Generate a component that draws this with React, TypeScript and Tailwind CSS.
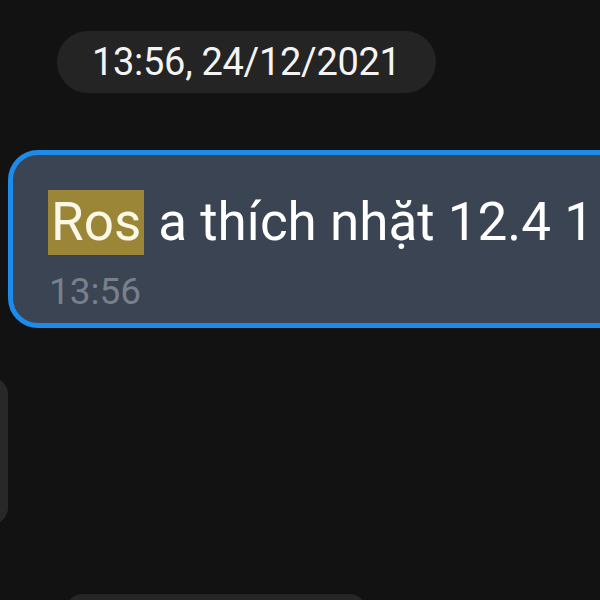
export default function App() {
  return (
    <div
      className="w-[600px] h-[600px] overflow-hidden bg-[#121212] flex flex-col"
      style={{ fontFamily: 'Roboto, "Noto Sans", sans-serif' }}
    >
      <div className="mt-[31px] ml-[57px] w-[379px] h-[62px] rounded-full bg-[#242424] flex items-center pl-[35px] shrink-0">
        <span className="text-[38px] leading-none text-[#f4f4f4] whitespace-nowrap tracking-[-0.3px]">
          13:56, 24/12/2021
        </span>
      </div>

      <div className="mt-[57px] ml-[8px] w-[720px] h-[178px] shrink-0 rounded-[30px] border-[5px] border-[#1d8be9] bg-[#3a4452] pl-[35px] pt-[35px] flex flex-col">
        <div className="flex items-center whitespace-nowrap text-[53px] leading-none text-white h-[65px]">
          <span className="bg-[#9a8636] h-[65px] flex items-center px-[3px] text-[#fbf8e8]">Ros</span>
          <span className="ml-[14px]">a thích nhặt 12.4 1</span>
        </div>
        <div className="mt-[18px] ml-[1px] text-[37px] leading-none text-[#78808c]">13:56</div>
      </div>

      <div className="mt-[50px] -ml-[12px] w-[20px] h-[146px] shrink-0 rounded-r-[16px] bg-[#282828]" />

      <div className="mt-[70px] ml-[65px] w-[302px] h-[30px] shrink-0 rounded-t-[18px] bg-[#262626]" />
    </div>
  );
}
